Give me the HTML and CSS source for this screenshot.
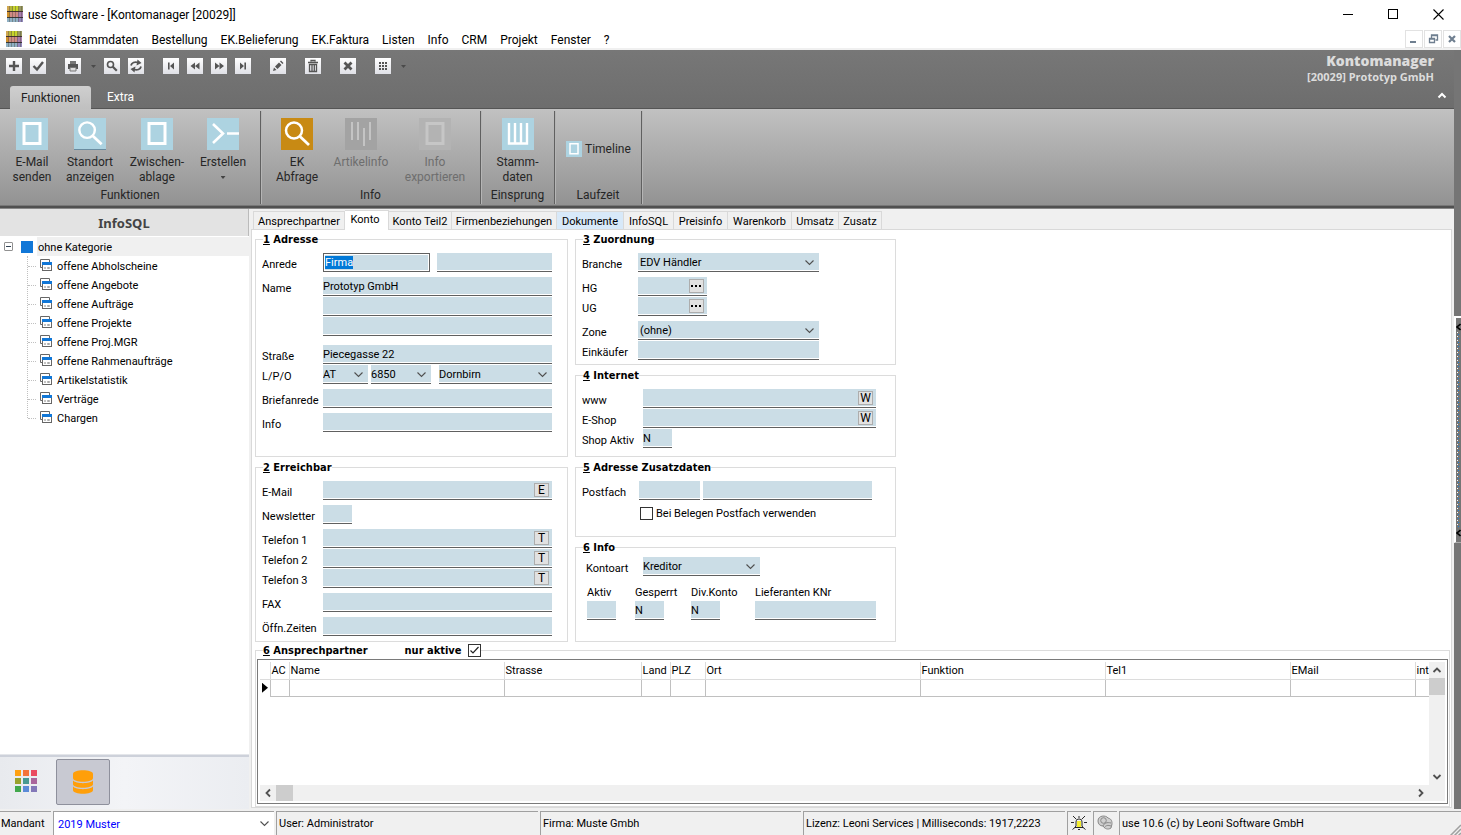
FILE: index.html
```html
<!DOCTYPE html>
<html lang="de">
<head>
<meta charset="utf-8">
<title>use Software - [Kontomanager [20029]]</title>
<link rel="stylesheet" href="styles.css">
</head>
<body>
<svg class="defs" aria-hidden="true">
  <symbol id="logo" viewBox="0 0 16 16">
    <path d="M0 0h16v5H0z" fill="#b5b83a"/><path d="M0 5h16v6H0z" fill="#d08a84"/><path d="M0 11h16v5H0z" fill="#8fb0c4"/>
    <path d="M0 0h3v5H0z" fill="#d0a850"/><path d="M6 0h5v5H6z" fill="#c6d32c"/><path d="M12 0h4v5h-4z" fill="#9a9a62"/>
    <path d="M0 6h3v5H0z" fill="#d0902c"/><path d="M11 6h5v5h-5z" fill="#a87cae"/><path d="M11 11h5v5h-5z" fill="#938ac0"/>
    <path d="M2.500 0v16M5.500 0v16M8.500 0v16M11.500 0v16M14.500 0v16" stroke="#4b4a3c" opacity=".4"/>
    <path d="M0 5.500h16M0 11.500h16" stroke="#2d2522" opacity=".85"/>
  </symbol>
  <symbol id="doc" viewBox="0 0 32 32"><rect width="32" height="32" fill="#add3e1"/><rect x="8" y="5.500" width="16" height="20" fill="none" stroke="#fff" stroke-width="3"/></symbol>
  <symbol id="lens" viewBox="0 0 32 32"><circle cx="13" cy="12.500" r="8" fill="none" stroke="#fff" stroke-width="2.500"/><path d="M19 18.500l9 8.500" stroke="#fff" stroke-width="2.800"/></symbol>
  <symbol id="win" viewBox="0 0 12 12"><path d="M2.500 8.500h-2v-8h9v3" fill="none" stroke="#666"/><rect x="2.500" y="3.500" width="9" height="8" fill="#fff" stroke="#666"/><path d="M2 3h10v3H2z" fill="#1177d7"/><path d="M4 9h2" stroke="#888"/><path d="M7.500 8.500h2v1h-2z" fill="none" stroke="#aaa"/></symbol>
  <symbol id="dots" viewBox="0 0 13 12"><path d="M1 5h2v2H1zM5 5h2v2H5zM9 5h2v2H9z"/></symbol>
</svg>

<header class="titlebar">
  <svg class="i16"><use href="#logo"/></svg>
  <h1>use Software - [Kontomanager [20029]]</h1>
  <div class="winbtns">
    <button aria-label="Minimieren"><svg viewBox="0 0 11 11"><path d="M0 5.500h10" stroke="#000"/></svg></button>
    <button aria-label="Maximieren"><svg viewBox="0 0 11 11"><rect x=".5" y=".5" width="9" height="9" fill="none" stroke="#000"/></svg></button>
    <button aria-label="Schließen"><svg viewBox="0 0 11 11"><path d="M.5.5l10 10M10.500.5l-10 10" stroke="#000" stroke-width="1.100"/></svg></button>
  </div>
</header>
<nav class="menubar">
  <svg class="i16"><use href="#logo"/></svg>
  <div class="menus"><button>Datei</button><button>Stammdaten</button><button>Bestellung</button><button>EK.Belieferung</button><button>EK.Faktura</button><button>Listen</button><button>Info</button><button>CRM</button><button>Projekt</button><button>Fenster</button><button>?</button></div>
  <div class="mdibtns">
    <button aria-label="Fenster minimieren"><svg viewBox="0 0 16 16"><path d="M4 11h6" stroke="#6f7f90" stroke-width="2"/></svg></button>
    <button aria-label="Fenster wiederherstellen"><svg viewBox="0 0 16 16"><path d="M6.500 7V4h6v5h-2M6 4.500h7" fill="none" stroke="#6f7f90" stroke-width="1.300"/><path d="M4.500 7.500h5v4h-5zM4 8h6" fill="none" stroke="#6f7f90" stroke-width="1.300"/></svg></button>
    <button aria-label="Fenster schließen"><svg viewBox="0 0 16 16"><path d="M5 5l6 6M11 5l-6 6" stroke="#6f7f90" stroke-width="2.200"/></svg></button>
  </div>
</nav>

<div class="frame">
<div class="app">
  <section class="ribbon-top">
    <div class="quick">
      <button aria-label="Neu"><svg viewBox="0 0 16 16"><path d="M8 3v10M3 8h10" stroke="#555" stroke-width="2.400"/></svg></button>
      <button aria-label="Speichern"><svg viewBox="0 0 16 16"><path d="M3.500 8l3.500 3.500L13 4" fill="none" stroke="#555" stroke-width="2.400"/></svg></button>
      <button class="sep" aria-label="Drucken"><svg viewBox="0 0 16 16"><path d="M5 3h6v3H5z" fill="#777"/><path d="M3 6h10v5H3z" fill="#555"/><path d="M5 9.500h6v3.500H5z" fill="#ddd" stroke="#777"/></svg></button>
      <button class="arrow" aria-label="Druckoptionen"></button>
      <button aria-label="Suchen"><svg viewBox="0 0 16 16"><circle cx="6.500" cy="6.500" r="3" fill="none" stroke="#555" stroke-width="1.600"/><path d="M8.800 8.800l4 4" stroke="#555" stroke-width="2.200"/></svg></button>
      <button aria-label="Aktualisieren"><svg viewBox="0 0 16 16"><path d="M3 7.500C3.500 4.500 7 3.500 10 4.500" fill="none" stroke="#555" stroke-width="1.800"/><path d="M9.500 1.500l4 3.500-5 2.500zM6.500 14.500l-4-3.500 5-2.500z" fill="#555"/><path d="M13 8.500c-.5 3-4 4-7 3" fill="none" stroke="#555" stroke-width="1.800"/></svg></button>
      <button class="sep" aria-label="Erster"><svg viewBox="0 0 16 16"><path d="M5 4.500h1.600v7H5zM11 4.500v7L7 8z" fill="#555"/></svg></button>
      <button aria-label="Zurück"><svg viewBox="0 0 16 16"><path d="M8 4.500v7L3.500 8zM12.500 4.500v7L8 8z" fill="#555"/></svg></button>
      <button aria-label="Weiter"><svg viewBox="0 0 16 16"><path d="M4 4.500v7L8.500 8zM8.500 4.500v7L13 8z" fill="#555"/></svg></button>
      <button aria-label="Letzter"><svg viewBox="0 0 16 16"><path d="M9.400 4.500H11v7H9.400zM5 4.500v7L9 8z" fill="#555"/></svg></button>
      <button class="sep" aria-label="Bearbeiten"><svg viewBox="0 0 16 16"><path d="M3 13l1-3.500 2.500 2.500zM5 8.500l4-4L11.500 7l-4 4zM10 3.500l1-1 2.500 2.500-1 1z" fill="#555"/></svg></button>
      <button class="sep" aria-label="Löschen"><svg viewBox="0 0 16 16"><path d="M6 3.500V2.500h4v1M3 4.500h10" fill="none" stroke="#555" stroke-width="1.300"/><path d="M4.500 6.500h7v7h-7zM7 7v6M9.300 7v6" fill="none" stroke="#555" stroke-width="1.300"/></svg></button>
      <button class="sep" aria-label="Abbrechen"><svg viewBox="0 0 16 16"><path d="M4.500 4.500l7 7M11.500 4.500l-7 7" stroke="#555" stroke-width="2.800"/></svg></button>
      <button class="sep" aria-label="Raster"><svg viewBox="0 0 16 16"><path d="M4 5h8M4 8h8M4 11h8" stroke="#555" stroke-width="2" stroke-dasharray="2 1"/></svg></button>
      <button class="arrow" aria-label="Rasteroptionen"></button>
    </div>
    <div class="context"><strong>Kontomanager</strong><span>[20029] Prototyp GmbH</span></div>
    <div class="rtabs"><button class="on">Funktionen</button><button>Extra</button>
      <button class="collapse" aria-label="Menüband minimieren"><svg viewBox="0 0 10 8"><path d="M1.500 5.500L5 2l3.500 3.500" fill="none" stroke="#fff" stroke-width="2"/></svg></button></div>
  </section>
  <section class="ribbon">
    <div class="rgroup g1">
      <div class="rbtns">
        <button><svg class="i32"><use href="#doc"/></svg><span>E-Mail<br>senden</span></button>
        <button><svg class="i32 blue under"><use href="#lens"/></svg><span>Standort<br>anzeigen</span></button>
        <button><svg class="i32"><use href="#doc"/></svg><span>Zwischen-<br>ablage</span></button>
        <button><svg class="i32 blue" viewBox="0 0 32 32"><path d="M6 6l10 9.500L6 25M20 15.500h12" fill="none" stroke="#fff" stroke-width="2.600"/></svg><span>Erstellen</span><i class="down"></i></button>
      </div>
      <p>Funktionen</p>
    </div>
    <div class="rgroup g2">
      <div class="rbtns">
        <button><svg class="i32 orange"><use href="#lens"/></svg><span>EK<br>Abfrage</span></button>
        <button disabled><svg class="i32 grey" viewBox="0 0 32 32"><path d="M7 4v18M13 4v18M19 10v18M25 4v18" stroke="#c4c4c4" stroke-width="2"/></svg><span>Artikelinfo</span></button>
        <button disabled><svg class="i32 faint" viewBox="0 0 32 32"><rect x="8" y="5.500" width="16" height="20" fill="none" stroke="#c6c6c6" stroke-width="3"/></svg><span>Info<br>exportieren</span></button>
      </div>
      <p>Info</p>
    </div>
    <div class="rgroup g3">
      <div class="rbtns">
        <button><svg class="i32 blue" viewBox="0 0 32 32"><path d="M7 5v20.500h18V5M13 5v20M19 5v20" fill="none" stroke="#fff" stroke-width="2.400"/></svg><span>Stamm-<br>daten</span></button>
      </div>
      <p>Einsprung</p>
    </div>
    <div class="rgroup g4">
      <button class="small"><svg class="i16"><use href="#doc"/></svg>Timeline</button>
      <p>Laufzeit</p>
    </div>
  </section>

  <main class="work">
    <aside class="side">
      <h2>InfoSQL</h2>
      <div class="tree">
        <div class="root"><button class="toggle" aria-label="Zuklappen"></button><i class="square"></i><span>ohne Kategorie</span></div>
        <ul>
          <li><svg><use href="#win"/></svg>offene Abholscheine</li>
          <li><svg><use href="#win"/></svg>offene Angebote</li>
          <li><svg><use href="#win"/></svg>offene Aufträge</li>
          <li><svg><use href="#win"/></svg>offene Projekte</li>
          <li><svg><use href="#win"/></svg>offene Proj.MGR</li>
          <li><svg><use href="#win"/></svg>offene Rahmenaufträge</li>
          <li><svg><use href="#win"/></svg>Artikelstatistik</li>
          <li><svg><use href="#win"/></svg>Verträge</li>
          <li><svg><use href="#win"/></svg>Chargen</li>
        </ul>
      </div>
      <div class="sidenav">
        <button aria-label="Module"><svg viewBox="0 0 22 22" width="22" height="22"><path d="M0 0h6v6H0z" fill="#ffa010"/><path d="M8 0h6v6H8z" fill="#f4743a"/><path d="M16 0h6v6h-6z" fill="#ea4a60"/><path d="M0 8h6v6H0z" fill="#9aa22c"/><path d="M8 8h6v6H8z" fill="#479a92"/><path d="M16 8h6v6h-6z" fill="#aa659c"/><path d="M0 16h6v6H0z" fill="#42a84c"/><path d="M8 16h6v6H8z" fill="#5b8bd8"/><path d="M16 16h6v6h-6z" fill="#8378b8"/></svg></button>
        <button class="on" aria-label="Datenbank"><svg viewBox="0 0 20 24" width="20" height="24"><path d="M0 4c0-5 20-5 20 0v4c0 5-20 5-20 0z" fill="#ff9f0a"/><path d="M0 10.500c3 3.500 17 3.500 20 0V14c0 5-20 5-20 0zM0 16.500c3 3.500 17 3.500 20 0V20c0 5-20 5-20 0z" fill="#ff9f0a"/></svg></button>
      </div>
    </aside>

    <section class="content">
      <div class="tabs" role="tablist">
        <button role="tab">Ansprechpartner</button><button role="tab" class="on" aria-selected="true">Konto</button><button role="tab">Konto Teil2</button><button role="tab">Firmenbeziehungen</button><button role="tab" class="hot">Dokumente</button><button role="tab">InfoSQL</button><button role="tab">Preisinfo</button><button role="tab">Warenkorb</button><button role="tab">Umsatz</button><button role="tab">Zusatz</button>
      </div>
      <form class="page">
        <div class="groups">
          <fieldset class="f1">
            <legend><u>1</u> Adresse</legend>
            <div class="row"><label for="anrede">Anrede</label><input id="anrede" class="focus w107" value="Firma"><input class="last w115" aria-label="Titel"></div>
            <div class="row s"><label for="name">Name</label><input id="name" value="Prototyp GmbH"></div>
            <div class="row"><span></span><input aria-label="Name 2"></div>
            <div class="row"><span></span><input aria-label="Name 3"></div>
            <div class="row l"><label for="str">Straße</label><input id="str" value="Piecegasse 22"></div>
            <div class="row"><label for="land">L/P/O</label><select id="land" class="w45"><option>AT</option></select><select class="plz" aria-label="PLZ"><option>6850</option></select><select class="last w113" aria-label="Ort"><option>Dornbirn</option></select></div>
            <div class="row s"><label for="brief">Briefanrede</label><input id="brief"></div>
            <div class="row s"><label for="info">Info</label><input id="info"></div>
          </fieldset>
          <div class="stack">
            <fieldset class="f3">
              <legend><u>3</u> Zuordnung</legend>
              <div class="row"><label for="branche">Branche</label><select id="branche" class="w181"><option>EDV Händler</option></select></div>
              <div class="row s"><label for="hg">HG</label><span class="combo w69"><input id="hg"><button type="button" aria-label="HG wählen"><svg><use href="#dots"/></svg></button></span></div>
              <div class="row"><label for="ug">UG</label><span class="combo w69"><input id="ug"><button type="button" aria-label="UG wählen"><svg><use href="#dots"/></svg></button></span></div>
              <div class="row s"><label for="zone">Zone</label><select id="zone" class="w181"><option>(ohne)</option></select></div>
              <div class="row"><label for="eink">Einkäufer</label><input id="eink" class="w181"></div>
            </fieldset>
            <fieldset class="f4">
              <legend><u>4</u> Internet</legend>
              <div class="row"><label for="www">www</label><span class="combo w233"><input id="www"><button type="button">W</button></span></div>
              <div class="row"><label for="eshop">E-Shop</label><span class="combo w233"><input id="eshop"><button type="button">W</button></span></div>
              <div class="row"><label for="aktiv">Shop Aktiv</label><input id="aktiv" class="w29" value="N"></div>
            </fieldset>
          </div>
          <fieldset class="f2">
            <legend><u>2</u> Erreichbar</legend>
            <div class="row"><label for="mail">E-Mail</label><span class="combo"><input id="mail"><button type="button">E</button></span></div>
            <div class="row s"><label for="news">Newsletter</label><input id="news" class="w29"></div>
            <div class="row s"><label for="t1">Telefon 1</label><span class="combo"><input id="t1"><button type="button">T</button></span></div>
            <div class="row"><label for="t2">Telefon 2</label><span class="combo"><input id="t2"><button type="button">T</button></span></div>
            <div class="row"><label for="t3">Telefon 3</label><span class="combo"><input id="t3"><button type="button">T</button></span></div>
            <div class="row s"><label for="fax">FAX</label><input id="fax"></div>
            <div class="row s"><label for="oz">Öffn.Zeiten</label><input id="oz"></div>
          </fieldset>
          <div class="stack">
            <fieldset class="f5">
              <legend><u>5</u> Adresse Zusatzdaten</legend>
              <div class="row gap"><label for="pf">Postfach</label><input id="pf" class="w61"><input class="w169" aria-label="Postfach Ort"></div>
              <label class="check"><input type="checkbox">Bei Belegen Postfach verwenden</label>
            </fieldset>
            <fieldset class="f6">
              <legend><u>6</u> Info</legend>
              <div class="row"><label for="kart">Kontoart</label><select id="kart" class="w117"><option>Kreditor</option></select></div>
              <div class="flags">
                <label>Aktiv<input class="w29"></label><label>Gesperrt<input class="w29" value="N"></label><label>Div.Konto<input class="w29" value="N"></label><label>Lieferanten KNr<input></label>
              </div>
            </fieldset>
          </div>
        </div>
        <fieldset class="f7">
          <legend><span><u>6</u> Ansprechpartner</span><label>nur aktive<input type="checkbox" checked></label></legend>
          <div class="gridbox">
            <div class="tablewrap">
              <table>
                <colgroup><col class="c0"><col class="c1"><col class="c2"><col class="c3"><col class="c4"><col class="c5"><col class="c6"><col class="c7"><col class="c8"><col class="c9"><col></colgroup>
                <thead><tr><th></th><th>AC</th><th>Name</th><th>Strasse</th><th>Land</th><th>PLZ</th><th>Ort</th><th>Funktion</th><th>Tel1</th><th>EMail</th><th>int</th></tr></thead>
                <tbody><tr><td class="mark"><i></i></td><td></td><td></td><td></td><td></td><td></td><td></td><td></td><td></td><td></td><td></td></tr></tbody>
              </table>
            </div>
            <div class="vscroll"><button type="button" aria-label="Nach oben"><svg viewBox="0 0 16 16"><path d="M4.500 10L8 6.500l3.500 3.500" fill="none" stroke="#505050" stroke-width="1.800"/></svg></button><i></i><button type="button" class="end" aria-label="Nach unten"><svg viewBox="0 0 16 16"><path d="M4.500 6L8 9.500 11.500 6" fill="none" stroke="#505050" stroke-width="1.800"/></svg></button></div>
            <div class="hscroll"><button type="button" aria-label="Nach links"><svg viewBox="0 0 16 16"><path d="M10 4.500L6.500 8l3.500 3.500" fill="none" stroke="#505050" stroke-width="1.800"/></svg></button><i></i><button type="button" class="end" aria-label="Nach rechts"><svg viewBox="0 0 16 16"><path d="M6 4.500L9.500 8 6 11.500" fill="none" stroke="#505050" stroke-width="1.800"/></svg></button></div>
          </div>
        </fieldset>
      </form>
    </section>
  </main>
</div>
<div class="strip"><button class="splitter" aria-label="Seitenleiste öffnen">
  <svg viewBox="0 0 5 8"><path d="M4.500 1L1 4l3.500 3" fill="none" stroke="#000" stroke-width="1.600"/></svg><i></i><svg viewBox="0 0 5 8"><path d="M4.500 1L1 4l3.500 3" fill="none" stroke="#000" stroke-width="1.600"/></svg></button></div>
</div>

<footer class="status">
  <label for="mandant">Mandant</label>
  <div class="mand"><select id="mandant"><option>2019 Muster</option></select></div>
  <span>User: Administrator</span>
  <span>Firma: Muste Gmbh</span>
  <span>Lizenz: Leoni Services | Milliseconds: 1917,2223</span>
  <span class="ic"><svg viewBox="0 0 18 18"><path d="M7 7h4v6H7z" fill="#f4ee30"/><path d="M6 12V8c0-4 6-4 6 0v4l1 1.500H5zM8 15.500h2M9 2v2M3 2l3.500 3.500M15 2l-3.500 3.500M1 8.500h3M14 8.500h3M2.500 15.500l3-2.500M15.500 15.500l-3-2.500" fill="none" stroke="#111" stroke-width=".9"/></svg></span>
  <span class="ic"><svg viewBox="0 0 18 18"><path d="M2 7c0-6 8-6 10-3 4 1 4 4 4 6l-1 4c-3 2-6 1-8-2-3 0-5-2-5-5z" fill="#d0d0d0" stroke="#888"/><circle cx="7.500" cy="6.500" r="2.800" fill="none" stroke="#888"/><path d="M7 12c1-3 4-4 8-3M8 14c2-3 4-3 7-2" fill="none" stroke="#888"/></svg></span>
  <span class="vers">use 10.6 (c) by Leoni Software GmbH<svg viewBox="0 0 12 12"><path d="M1 12L12 1M5 12l7-7M9 12l3-3" stroke="#a0a0a0" stroke-width="1.500"/></svg></span>
</footer>
<script src="app.js"></script>
</body>
</html>
```
FILE: app.js
```js
// Put the cursor in the first field with its text selected.
const first = document.getElementById('anrede');
first.focus();
first.select();
```
FILE: styles.css
```css
* { box-sizing: border-box; }
body {
  margin: 0; min-height: 100vh; display: flex; flex-direction: column;
  background: #fff; color: #000;
  font: 11px/13px Roboto, "Open Sans", sans-serif;
}
button { font: inherit; color: inherit; background: none; border: 0; padding: 0; margin: 0; }
h1, h2, p, ul { margin: 0; padding: 0; font-weight: normal; list-style: none; }
.defs { position: absolute; width: 0; height: 0; }
.i16 { width: 16px; height: 16px; flex: none; }
.i32 { width: 32px; height: 32px; display: block; }

/* title and menu */
.titlebar { display: flex; align-items: center; height: 30px; padding: 0 0 2px 7px; }
.titlebar h1 { font-size: 12px; line-height: 16px; margin-left: 5px; padding-top: 2px; flex: 1; }
.winbtns { display: flex; }
.winbtns button { width: 45px; height: 28px; display: grid; place-items: center; }
.winbtns svg { width: 11px; height: 11px; }
.menubar { display: flex; align-items: center; height: 20px; padding-left: 6px; border-bottom: 2px solid #f0f0f0; font-size: 12px; }
.menus { display: flex; gap: 13px; margin-left: 7px; flex: 1; padding-top: 2px; }
.mdibtns { display: flex; gap: 1px; }
.mdibtns button { width: 18px; height: 18px; border: 1px solid #e2e2e2; }
.mdibtns svg { display: block; width: 16px; height: 16px; }

/* frame */
.frame { flex: 1; display: flex; }
.app { flex: 1; min-width: 0; display: flex; flex-direction: column; }
.strip { width: 7px; background: #757575; padding-top: 266px; }
.splitter { display: flex; flex-direction: column; align-items: flex-end; justify-content: space-between; width: 7px; height: 227px; padding: 5px 0; border-top: 2px solid #fff; border-left: 2px solid #fff; border-bottom: 1px solid #aaa; }
.splitter svg { width: 5px; height: 8px; }
.splitter i { width: 4px; height: 196px; background: repeating-linear-gradient(#fff 0 1px, transparent 1px 4px) 0 0 / 1px 100% no-repeat, repeating-linear-gradient(#1b7fd6 0 1px, transparent 1px 4px) 1px 2px / 1px 100% no-repeat; }

/* ribbon */
.ribbon-top { display: grid; grid-template-columns: 1fr auto; grid-template-rows: 35px 24px; background: linear-gradient(#777, #6d6d6d); color: #fff; font-size: 12px; }
.quick { display: flex; gap: 8px; padding: 8px 0 0 6px; }
.quick button { width: 16px; height: 16px; background: linear-gradient(#fff, #dfe0e6); }
.quick svg { display: block; width: 16px; height: 16px; }
.quick .sep { margin-left: 11px; }
.quick .arrow { width: 5px; height: 3px; margin: 7px 0 0 2px; background: #4a4a4a; clip-path: polygon(0 0, 100% 0, 50% 100%); }
.context { display: flex; flex-direction: column; align-items: flex-end; padding: 3px 20px 0 0; color: #dcdcdc; font: bold 11px/15px "Open Sans", sans-serif; }
.context strong { font-size: 14px; line-height: 16px; }
.rtabs { grid-column: 1 / -1; display: flex; align-items: flex-end; padding-left: 10px; border-bottom: 1px solid #555; }
.rtabs button { height: 22px; padding: 1px 16px 0; }
.rtabs .on { width: 81px; padding: 1px 0 0; color: #222; background: linear-gradient(#cfcfcf, #c0c0c0); border-radius: 3px 3px 0 0; margin-bottom: -1px; height: 23px; }
.rtabs .collapse { margin-left: auto; padding: 0 0 2px; width: 10px; margin-right: 7px; }
.rtabs .collapse svg { width: 10px; height: 8px; }
.ribbon { display: flex; min-height: 100px; background: linear-gradient(#c1c1c1, #919191); color: #262626; font-size: 12px; line-height: 15px; border-bottom: 1px solid #888; box-shadow: inset 0 -2px #505050, inset 0 -3px #777; padding-bottom: 4px; }
.rgroup { display: flex; flex-direction: column; border-right: 1px solid #606060; box-shadow: 1px 0 #b5b5b5; margin-top: 2px; padding-top: 7px; }
.rgroup p { margin-top: auto; text-align: center; line-height: 16px; padding-bottom: 1px; }
.rbtns { display: grid; }
.rbtns button { display: flex; flex-direction: column; align-items: center; white-space: nowrap; }
.rbtns span { margin-top: 5px; }
.rbtns button:disabled { color: #6e6e6e; }
.g1 { width: 261px; } .g1 .rbtns { grid-template-columns: 52px 64px 70px 62px; padding-left: 6px; }
.g2 { width: 220px; } .g2 .rbtns { grid-template-columns: 54px 74px 74px; padding-left: 9px; }
.g3 { width: 74px; }
.g4 { width: 87px; }
.blue { background: #add3e1; } .orange { background: #c88a14; } .grey { background: #a3a3a3; } .faint { background: #b3b3b3; }
.under { border-bottom: 1px solid #6a8ca0; }
.down { width: 5px; height: 3px; margin-top: 6px; background: #444; clip-path: polygon(0 0, 100% 0, 50% 100%); }
.small { display: flex; align-items: center; gap: 3px; padding: 23px 0 0 11px; }

/* workspace */
.work { flex: 1; display: flex; background: #f0f0f0; }
.side { width: 249px; display: flex; flex-direction: column; background: #fff; }
.side h2 { height: 27px; background: #e3e3e3; border-right: 1px solid #bbb; text-align: center; color: #444; font: bold 13px/29px "Noto Sans", sans-serif; }
.tree { flex: 1; padding-top: 1px; line-height: 21px; }
.root { display: flex; align-items: center; height: 19px; padding-left: 4px; }
.toggle { width: 9px; height: 9px; border: 1px solid #919191; border-radius: 1px; background: linear-gradient(#345, #345) center / 5px 1px no-repeat; }
.square { width: 12px; height: 12px; background: #1177d7; margin: 0 4px 0 8px; }
.root span { flex: 1; height: 19px; background: #f0f0f0; padding-left: 1px; }
.tree ul { margin-left: 27px; border-left: 1px dotted #c0c0c0; height: 162px; }
.tree li { display: flex; align-items: center; height: 19px; padding-top: 1px; }
.tree li::before { content: ""; width: 8px; border-top: 1px dotted #c0c0c0; margin-right: 4px; }
.tree li svg { width: 12px; height: 12px; margin: 0 5px 2px 0; }
.sidenav { display: flex; align-items: center; height: 55px; padding-left: 15px; background: linear-gradient(90deg, #e8eaee, #f3f4f7 50%, #ebedf1); border-top: 1px solid #e4e6ea; box-shadow: inset 0 2px #cdd1da; }
.sidenav button { display: grid; place-items: center; margin-bottom: 3px; }
.sidenav .on { width: 54px; height: 46px; margin: 0 0 0 19px; background: #c8c9d2; border: 1px solid #8e909c; border-radius: 2px; }

/* tab control */
.content { flex: 1; min-width: 0; display: flex; flex-direction: column; padding: 1px 2px 1px; }
.tabs { display: grid; grid-template-columns: 92px 44px 63px 105px 67px 50px 54px 64px 47px 43px; height: 19px; padding: 0 2px; align-items: end; }
.tabs button { height: 18px; border: 1px solid #d9d9d9; border-width: 1px 1px 0 0; padding-top: 2px; white-space: nowrap; }
.tabs button:first-child { border-left-width: 1px; }
.tabs .on { height: 20px; margin-bottom: -1px; padding: 0 3px 3px 0; background: #fff; z-index: 1; }
.tabs .hot { background: #d8e9f9; }
.page { flex: 1; display: flex; flex-direction: column; gap: 2px; background: #fff; border: 1px solid #d9d9d9; padding: 3px 1px 0 3px; }

/* form groups */
.groups { display: grid; grid-template-columns: 313px 321px; gap: 4px 7px; }
.stack { display: flex; flex-direction: column; gap: 4px; }
fieldset { min-width: 0; margin: 0; border: 1px solid #dcdcdc; padding: 8px 15px 4px 6px; --lab: 61px; }
legend { margin-left: 1px; padding: 0; font: bold 11px/14px "DejaVu Sans Condensed", "DejaVu Sans", sans-serif; height: 12px; }
.f1 { padding-bottom: 24px; }
.f3 { --lab: 56px; }
.f4 { padding-bottom: 8px; }
.f5 { padding-bottom: 16px; --lab: 57px; }
.f6 { padding: 4px 19px 21px 10px; --lab: 57px; }
.f6 legend { margin-left: -3px; }
.row { display: flex; margin-bottom: 1px; }
.row:last-child { margin-bottom: 0; }
.row.s { margin-top: 5px; }
.row.l { margin-top: 9px; }
.row > :first-child { flex: none; width: var(--lab); padding-top: 5px; white-space: nowrap; }
.row > label { height: 19px; }
.row input, .row select, .combo, .flags input { flex: 1; min-width: 0; }
.w29 { width: 29px; } .w45 { width: 45px; } .w61 { width: 61px; } .w69 { width: 69px; } .w107 { width: 107px; }
.w113 { width: 113px; } .w115 { width: 115px; } .w117 { width: 117px; } .w169 { width: 169px; } .w181 { width: 181px; } .w233 { width: 233px; }
.row [class*="w"] { flex: none; }
.plz { flex: none !important; width: 60px; margin-left: 3px; }
input:not([type]), select {
  appearance: none; height: 19px; padding: 1px 0 0; border: 0; border-bottom: 1px solid #606060; border-radius: 0; outline: 0;
  font: inherit; color: #000; background: linear-gradient(#cbdde6, #cbdde6) 0 0 / 100% 17px no-repeat;
}
input { margin: 0; }
.row .last { margin-left: auto; }
.gap > input + input { margin-left: 3px; }
select {
  padding-right: 18px;
  background: url("data:image/svg+xml,%3Csvg xmlns='http://www.w3.org/2000/svg' width='9' height='6'%3E%3Cpath d='M.5.5l4 4 4-4' fill='none' stroke='%23505050' stroke-width='1.1'/%3E%3C/svg%3E") right 5px top 7px no-repeat,
    linear-gradient(#cbdde6, #cbdde6) 0 0 / 100% 17px no-repeat;
}
select.w181 { padding-left: 2px; }
input.focus { border: 1px solid #606060; padding: 0 1px; background: #cbdde6; box-shadow: inset 0 0 0 1px #fff; }
input.focus::selection { background: #0078d7; color: #fff; }
.combo { display: grid; }
.combo > * { grid-area: 1 / 1; }
.combo button { justify-self: end; margin: 2px 3px 0 0; width: 15px; height: 14px; border: 1px solid #adadad; background: #e1e1e1; font-size: 12px; line-height: 12px; text-align: center; }
.combo button svg { display: block; width: 13px; height: 12px; }
input[type="checkbox"] { appearance: none; width: 13px; height: 13px; border: 1px solid #333; background: #fff; }
input[type="checkbox"]:checked { background: url("data:image/svg+xml,%3Csvg xmlns='http://www.w3.org/2000/svg' width='11' height='11'%3E%3Cpath d='M1.500 5.500l2.500 2.500 5.500-6' fill='none' stroke='%23222' stroke-width='1.200'/%3E%3C/svg%3E"); }
.check { display: flex; align-items: center; gap: 3px; margin: 7px 0 0 58px; }
.flags { display: grid; grid-template-columns: 48px 56px 64px 121px; margin: 11px 0 0 1px; }
.flags label { display: flex; flex-direction: column; gap: 2px; line-height: 12px; white-space: nowrap; }
.flags label input { flex: none; }

/* contact list */
.f7 { flex: 1; display: flex; flex-direction: column; padding: 2px 1px 2px; }
.f7 legend { display: flex; align-items: center; margin-left: 6px; height: 13px; gap: 37px; }
.f7 legend label { display: flex; gap: 6px; }
.gridbox { flex: 1; display: grid; grid-template-columns: 1fr 16px; grid-template-rows: 1fr 16px; border: 1px solid #7a7a7a; padding: 2px; min-height: 145px; }
.tablewrap { overflow: hidden; min-width: 0; }
table { table-layout: fixed; border-collapse: collapse; width: 100%; }
.c0 { width: 10px; } .c1 { width: 19px; } .c2 { width: 215px; } .c3 { width: 137px; } .c4 { width: 29px; } .c5 { width: 35px; } .c6 { width: 215px; } .c7 { width: 185px; } .c8 { width: 185px; } .c9 { width: 125px; }
th, td { height: 17px; padding: 0 0 0 1px; border-right: 1px solid #dcdcdc; border-bottom: 1px solid #dcdcdc; text-align: left; font-weight: normal; white-space: nowrap; }
td { border-color: #c0c0c0; }
th:last-child, td:last-child { border-right: 0; }
.mark { border-bottom: 0; }
.mark i { display: block; width: 6px; height: 10px; margin-left: 1px; background: #000; clip-path: polygon(0 0, 100% 50%, 0 100%); }
.vscroll, .hscroll { display: flex; background: #f0f0f0; }
.vscroll { flex-direction: column; }
.hscroll { grid-column: 1 / -1; padding-right: 16px; }
.vscroll button, .hscroll button { width: 16px; height: 16px; flex: none; }
.vscroll svg, .hscroll svg { display: block; width: 16px; height: 16px; }
.vscroll i, .hscroll i { width: 16px; height: 17px; background: #cdcdcd; }
.end { margin-top: auto; }
.hscroll .end { margin: 0 0 0 auto; }
.hscroll i { width: 17px; height: 16px; }

/* status bar */
.status { display: grid; grid-template-columns: 50px 222px 262px 261px 262px 24px 24px 1fr; gap: 2px; height: 26px; padding-top: 2px; background: #f0f0f0; line-height: 23px; }
.status > * { border-top: 1px solid #a0a0a0; border-left: 1px solid #a0a0a0; padding-left: 2px; white-space: nowrap; }
.status > label { border-left: 0; padding-left: 1px; margin-right: -1px; }
.status > .mand { background: #fff; padding: 0; margin-left: 1px; }
.status select { width: 100%; height: 22px; border: 0; background-size: auto, 0 0; background-position: right 5px top 9px, 0 0; color: #0000ff; padding-left: 4px; }
.ic svg { width: 18px; height: 18px; display: block; margin-top: 2px; }
.vers { display: flex; justify-content: space-between; }
.vers svg { width: 12px; height: 12px; align-self: end; }
```
